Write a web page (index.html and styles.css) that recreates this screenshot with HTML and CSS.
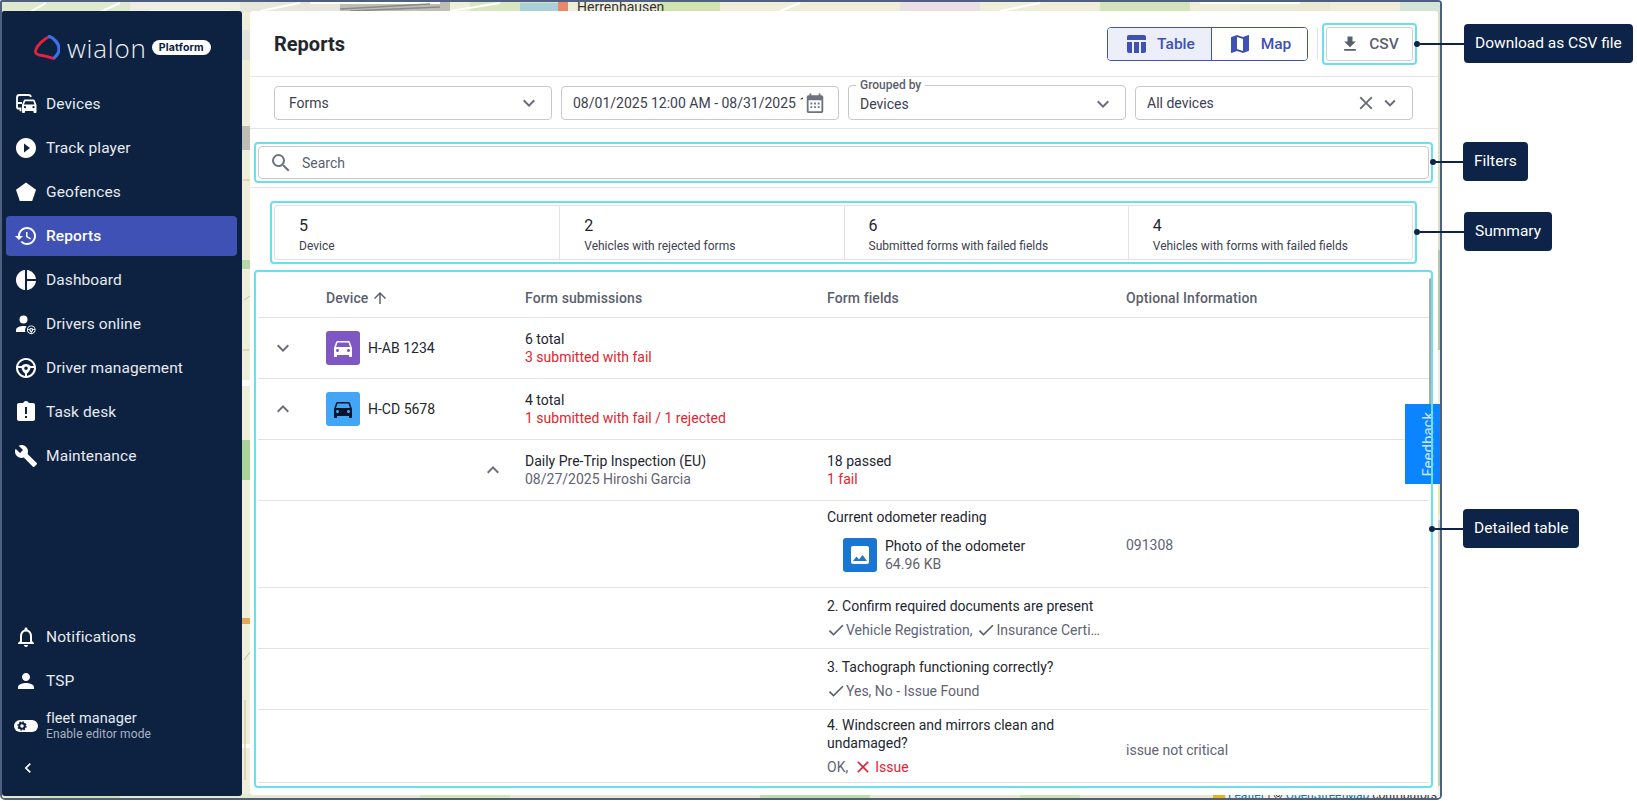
FILE: index.html
```html
<!DOCTYPE html>
<html lang="en">
<head>
<meta charset="utf-8">
<title>Reports</title>
<link rel="stylesheet" href="styles.css">
</head>
<body>
<svg class="defs" width="0" height="0" aria-hidden="true">
  <symbol id="i-down" viewBox="0 0 24 24"><path d="M16.59 8.59 12 13.17 7.41 8.59 6 10l6 6 6-6z"/></symbol>
  <symbol id="i-up" viewBox="0 0 24 24"><path d="M12 8l-6 6 1.41 1.41L12 10.83l4.59 4.58L18 14z"/></symbol>
  <symbol id="i-close" viewBox="0 0 24 24"><path d="M19 6.41 17.59 5 12 10.59 6.41 5 5 6.41 10.59 12 5 17.59 6.41 19 12 13.41 17.59 19 19 17.59 13.41 12z"/></symbol>
  <symbol id="i-check" viewBox="0 0 24 24"><path d="M9 16.17 4.83 12l-1.42 1.41L9 19 21 7l-1.41-1.41z"/></symbol>
  <symbol id="i-car" viewBox="0 0 24 24"><path d="M18.92 6.01C18.72 5.42 18.16 5 17.5 5h-11c-.66 0-1.21.42-1.42 1.01L3 12v8c0 .55.45 1 1 1h1c.55 0 1-.45 1-1v-1h12v1c0 .55.45 1 1 1h1c.55 0 1-.45 1-1v-8l-2.08-5.99zM6.5 16c-.83 0-1.5-.67-1.5-1.5S5.67 13 6.5 13s1.5.67 1.5 1.5S7.33 16 6.5 16zm11 0c-.83 0-1.5-.67-1.5-1.5s.67-1.5 1.5-1.5 1.5.67 1.5 1.5-.67 1.5-1.5 1.5zM5 11l1.5-4.5h11L19 11H5z"/></symbol>
  <symbol id="i-wheel" viewBox="0 0 24 24"><path d="M12 2C6.48 2 2 6.48 2 12s4.48 10 10 10 10-4.48 10-10S17.52 2 12 2zm0 2c3.7 0 6.8 2.5 7.7 6h-3.2c-1-1.2-2.7-2-4.5-2s-3.500.8-4.500 2H4.300c.9-3.500 4-6 7.700-6zM4 12h3.500c.6 2.300 1.900 4.500 3.500 5.600v2.300C7.200 19.400 4.300 16 4 12zm9 7.900v-2.300c1.600-1.100 2.900-3.300 3.500-5.600H20c-.3 4-3.200 7.400-7 7.900zM12 10.500a1.800 1.800 0 1 1 0 3.600 1.800 1.800 0 0 1 0-3.600z"/></symbol>
</svg>

<div class="stage">
  <div class="window">
    <svg class="map" viewBox="0 0 1442 801" width="1442" height="801" aria-hidden="true">
      <rect width="1442" height="801" fill="#efeeda"/>
      <rect x="0" y="0" width="130" height="12" fill="#dfe9d0"/>
      <rect x="130" y="0" width="110" height="12" fill="#eeeee4"/>
      <rect x="240" y="0" width="120" height="12" fill="#e6e6dc"/>
      <rect x="340" y="0" width="110" height="12" fill="#bdbdb6"/>
      <rect x="470" y="0" width="90" height="12" fill="#d7e6c0"/>
      <rect x="520" y="3" width="40" height="8" fill="#a9cfd8"/>
      <rect x="558" y="0" width="10" height="12" fill="#e8876c"/>
      <rect x="660" y="0" width="60" height="12" fill="#cfe4ae"/>
      <rect x="900" y="0" width="80" height="12" fill="#e9dfe4"/>
      <rect x="1100" y="0" width="90" height="12" fill="#d3e3bb"/>
      <rect x="1240" y="0" width="90" height="12" fill="#e9e9d4"/>
      <rect x="1400" y="0" width="42" height="12" fill="#d5e4d8"/>
      <path d="M30 12 46 3M100 12 120 3M150 11h80M260 11 300 3M310 3h130M450 11 500 3M600 11 620 3M780 11 800 3M1000 11 1040 3M1200 3h100" stroke="#fff" stroke-width="2" fill="none"/>
      <path d="M340 9 430 4M350 11 440 7" stroke="#8a8a86" stroke-width="1.500" fill="none"/>
      <rect x="242" y="30" width="8" height="30" fill="#e3e3de"/>
      <rect x="242" y="126" width="8" height="24" fill="#bdbdb6"/>
      <rect x="242" y="260" width="8" height="9" fill="#b8d7a8"/>
      <rect x="242" y="380" width="8" height="6" fill="#fff"/>
      <rect x="242" y="440" width="8" height="40" fill="#a9d39b"/>
      <rect x="242" y="618" width="8" height="6" fill="#e5a65a"/>
      <rect x="242" y="744" width="8" height="4" fill="#fff"/>
      <path d="M243 180h7M243 350h6M244 300l6-4M244 660l6-8M245 700v80" stroke="#d5b98a" stroke-width="1" fill="none"/>
      <rect x="0" y="794" width="1442" height="6" fill="#e6e8cf"/>
      <rect x="40" y="794" width="80" height="6" fill="#cfe0b0"/>
      <rect x="420" y="794" width="90" height="6" fill="#d6e3b4"/>
      <rect x="760" y="794" width="110" height="6" fill="#bddcae"/>
      <rect x="1020" y="794" width="60" height="6" fill="#cfe3b1"/>
      <rect x="1213" y="794" width="12" height="6" fill="#e4b61a"/>
      <rect x="1438" y="12" width="4" height="240" fill="#d8e2c2"/>
      <rect x="1438" y="250" width="4" height="100" fill="#b3c9a8"/>
      <rect x="1438" y="484" width="4" height="30" fill="#eded9c"/>
      <rect x="1438" y="520" width="4" height="120" fill="#cfcfc6"/>
      <rect x="1438" y="640" width="4" height="150" fill="#bcd7a8"/>
      <text x="577" y="12" class="map-label">Herrenhausen</text>
      <rect x="1226" y="786" width="216" height="14" fill="#f2f2ec"/>
      <text x="1228" y="799" class="map-attr"><tspan class="map-link">Leaflet</tspan> | © <tspan class="map-link">OpenStreetMap</tspan> contributors</text>
    </svg>

    <aside class="sidebar">
      <div class="logo">
        <svg class="logo-mark" viewBox="0 0 26 25" width="26" height="25" aria-hidden="true">
          <path d="M15.500 1.500C10 4 3 10 1.500 15.500 1 19 4 20 8 20.500c4 .5 8 2 12 3" fill="none" stroke="#e8203f" stroke-width="2.800" stroke-linecap="round"/>
          <path d="M15.500 1.500C20 3 25 9 25 13.500c0 4-2 7-4.500 9" fill="none" stroke="#3d6fe8" stroke-width="3.200" stroke-linecap="round"/>
        </svg>
        <span class="logo-word">wialon</span>
        <span class="logo-badge">Platform</span>
      </div>
      <nav class="nav">
        <a class="nav-item">
          <svg class="nav-icon" viewBox="0 0 24 24" aria-hidden="true"><path d="M3 16.500V5.500C3 4 4 3 5.500 3h9c1.200 0 2.200.8 2.400 2" fill="none" stroke="#fff" stroke-width="1.800"/><path d="M3 16.500h3.500v2.800" fill="none" stroke="#fff" stroke-width="1.800"/><path d="M3 11h5" stroke="#fff" stroke-width="1.800"/><path d="M14 7.500h5.500c.6 0 1.100.4 1.300.9L22.500 13v7a1 1 0 0 1-1 1h-1a1 1 0 0 1-1-1v-1H11v1a1 1 0 0 1-1 1H9a1 1 0 0 1-1-1v-7l1.700-4.600c.2-.5.700-.9 1.300-.9zM10 12.500h10.500l-1.200-3.300h-8.100zM11 16.300a1.100 1.100 0 1 0 0-2.200 1.100 1.100 0 0 0 0 2.200zm8.500 0a1.100 1.100 0 1 0 0-2.200 1.100 1.100 0 0 0 0 2.200z"/></svg>
          <span>Devices</span>
        </a>
        <a class="nav-item">
          <svg class="nav-icon" viewBox="0 0 24 24" aria-hidden="true"><path d="M12 2C6.480 2 2 6.480 2 12s4.480 10 10 10 10-4.480 10-10S17.520 2 12 2zm-2 14.500v-9l6 4.500-6 4.500z"/></svg>
          <span>Track player</span>
        </a>
        <a class="nav-item">
          <svg class="nav-icon" viewBox="0 0 24 24" aria-hidden="true"><path d="M12 2.500 2 9.800 5.800 21h12.400L22 9.800z"/></svg>
          <span>Geofences</span>
        </a>
        <a class="nav-item nav-item-active">
          <svg class="nav-icon" viewBox="0 0 24 24" aria-hidden="true"><path d="M13 3c-4.970 0-9 4.030-9 9H1l3.890 3.890.07.140L9 12H6c0-3.870 3.130-7 7-7s7 3.130 7 7-3.130 7-7 7c-1.930 0-3.680-.790-4.940-2.060l-1.420 1.420C8.270 19.990 10.510 21 13 21c4.970 0 9-4.030 9-9s-4.030-9-9-9zm-1 5v5l4.280 2.540.720-1.210-3.500-2.080V8H12z"/></svg>
          <span>Reports</span>
        </a>
        <a class="nav-item">
          <svg class="nav-icon" viewBox="0 0 24 24" aria-hidden="true"><path d="M11 2v20c-5.070-.500-9-4.790-9-10s3.930-9.500 9-10zm2.030 0v8.990H22c-.470-4.740-4.240-8.520-8.970-8.990zm0 11.010V22c4.740-.470 8.500-4.250 8.970-8.990h-8.970z"/></svg>
          <span>Dashboard</span>
        </a>
        <a class="nav-item">
          <svg class="nav-icon" viewBox="0 0 24 24" aria-hidden="true"><circle cx="9.500" cy="7.500" r="4"/><path d="M2 20v-2c0-2.700 4.500-4 7.500-4 1 0 2 .1 3 .4-1 1.100-1.500 2.300-1.500 3.600 0 .7.100 1.400.4 2z"/><use href="#i-wheel" x="12" y="12.500" width="10.500" height="10.500"/></svg>
          <span>Drivers online</span>
        </a>
        <a class="nav-item">
          <svg class="nav-icon" viewBox="0 0 24 24" aria-hidden="true"><use href="#i-wheel"/></svg>
          <span>Driver management</span>
        </a>
        <a class="nav-item">
          <svg class="nav-icon" viewBox="0 0 24 24" aria-hidden="true"><path d="M19 3h-4.180C14.400 1.840 13.300 1 12 1c-1.300 0-2.400.840-2.820 2H5c-1.100 0-2 .900-2 2v14c0 1.100.900 2 2 2h14c1.100 0 2-.900 2-2V5c0-1.100-.900-2-2-2zm-6 15h-2v-2h2v2zm0-4h-2V7h2v7z"/></svg>
          <span>Task desk</span>
        </a>
        <a class="nav-item">
          <svg class="nav-icon" viewBox="0 0 24 24" aria-hidden="true"><path d="M22.700 19l-9.100-9.100c.900-2.300.400-5-1.500-6.900-2-2-5-2.400-7.400-1.300L9 6 6 9 1.600 4.700C.400 7.100.900 10.100 2.900 12.100c1.900 1.900 4.600 2.400 6.900 1.500l9.100 9.100c.400.400 1 .400 1.400 0l2.300-2.300c.500-.400.500-1.100.100-1.400z"/></svg>
          <span>Maintenance</span>
        </a>
      </nav>
      <div class="nav nav-bottom">
        <a class="nav-item">
          <svg class="nav-icon" viewBox="0 0 24 24" aria-hidden="true"><path d="M12 22c1.100 0 2-.900 2-2h-4c0 1.100.900 2 2 2zm6-6v-5c0-3.070-1.630-5.640-4.500-6.320V4c0-.830-.670-1.500-1.500-1.500s-1.500.670-1.500 1.500v.680C7.640 5.360 6 7.920 6 11v5l-2 2v1h16v-1l-2-2zm-2 1H8v-6c0-2.480 1.510-4.500 4-4.500s4 2.020 4 4.500v6z"/></svg>
          <span>Notifications</span>
        </a>
        <a class="nav-item">
          <svg class="nav-icon" viewBox="0 0 24 24" aria-hidden="true"><path d="M12 12c2.210 0 4-1.790 4-4s-1.790-4-4-4-4 1.790-4 4 1.790 4 4 4zm0 2c-2.670 0-8 1.340-8 4v2h16v-2c0-2.660-5.330-4-8-4z"/></svg>
          <span>TSP</span>
        </a>
        <a class="nav-item nav-item-role">
          <svg class="nav-toggle" viewBox="0 0 24 12" aria-hidden="true"><rect width="24" height="12" rx="6" fill="#fff"/><circle cx="8" cy="6" r="2.800" fill="none" stroke="#0d2240" stroke-width="2"/><circle cx="8" cy="6" r="4" fill="none" stroke="#0d2240" stroke-width="1.400" stroke-dasharray="1.500 1.640"/></svg>
          <span class="role-text">
            <span class="role-name">fleet manager</span>
            <span class="role-hint">Enable editor mode</span>
          </span>
        </a>
        <a class="nav-collapse">
          <svg class="nav-chevron" viewBox="0 0 24 24" aria-hidden="true"><path d="M15.410 7.410 14 6l-6 6 6 6 1.410-1.410L10.830 12z"/></svg>
        </a>
      </div>
    </aside>

    <main class="panel">
      <header class="panel-head">
        <h1 class="panel-title">Reports</h1>
        <div class="seg">
          <button class="seg-btn seg-btn-active">
            <svg class="seg-icon" viewBox="0 0 24 24" aria-hidden="true"><path d="M10 10.020h5V21h-5zM17 21h3c1.100 0 2-.900 2-2v-9h-5v11zm3-18H5c-1.100 0-2 .900-2 2v3h19V5c0-1.100-.900-2-2-2zM3 19c0 1.100.900 2 2 2h3V10H3v9z"/></svg>
            Table
          </button>
          <button class="seg-btn">
            <svg class="seg-icon" viewBox="0 0 24 24" aria-hidden="true"><path d="M20.500 3l-.160.030L15 5.100 9 3 3.360 4.900c-.210.070-.360.250-.360.480V20.500c0 .280.220.500.500.500l.160-.030L9 18.900l6 2.100 5.640-1.900c.210-.070.360-.250.360-.480V3.500c0-.280-.220-.500-.500-.500zM15 19l-6-2.110V5l6 2.110V19z"/></svg>
            Map
          </button>
        </div>
        <span class="head-sep"></span>
        <div class="hl hl-csv">
          <button class="csv-btn">
            <svg class="csv-icon" viewBox="0 0 24 24" aria-hidden="true"><path d="M19 9h-4V3H9v6H5l7 7 7-7zM5 18v2h14v-2H5z"/></svg>
            CSV
          </button>
        </div>
      </header>

      <section class="filters">
        <div class="field field-forms"><span class="field-text">Forms</span><svg class="ico ico-chev"><use href="#i-down"/></svg></div>
        <div class="field">
          <span class="field-text field-date">08/01/2025 12:00 AM - 08/31/2025 11:59 PM</span>
          <svg class="ico-cal" viewBox="0 0 24 24" aria-hidden="true"><path fill-rule="evenodd" d="M5 3.500h1V1.500h2v2h8v-2h2v2h1c1.100 0 2 .9 2 2V21c0 1.100-.9 2-2 2H5c-1.100 0-2-.9-2-2V5.500c0-1.100.9-2 2-2zM5 9v12h14V9zM7 11.500h2v2H7zM11 11.500h2v2h-2zM15 11.500h2v2h-2zM7 15.500h2v2H7zM11 15.500h2v2h-2zM15 15.500h2v2h-2z"/></svg>
        </div>
        <div class="field field-group">
          <span class="field-legend">Grouped by</span>
          <span class="field-text">Devices</span>
          <svg class="ico ico-chev"><use href="#i-down"/></svg>
        </div>
        <div class="field">
          <span class="field-text">All devices</span>
          <svg class="ico ico-x"><use href="#i-close"/></svg>
          <svg class="ico ico-chev-small"><use href="#i-down"/></svg>
        </div>
      </section>

      <section class="search-wrap">
        <div class="hl">
          <div class="search">
            <svg class="search-icon" viewBox="0 0 24 24" aria-hidden="true"><path d="M15.500 14h-.790l-.280-.270A6.471 6.471 0 0 0 16 9.500 6.500 6.500 0 1 0 9.500 16c1.610 0 3.090-.590 4.230-1.570l.270.280v.790l5 4.990L20.490 19l-4.990-5zm-6 0C7.010 14 5 11.990 5 9.500S7.010 5 9.500 5 14 7.010 14 9.500 11.990 14 9.500 14z"/></svg>
            <span class="search-text">Search</span>
          </div>
        </div>
      </section>

      <section class="hl hl-summary">
        <div class="summary">
          <div class="sum-cell"><span class="sum-num">5</span><span class="sum-label">Device</span></div>
          <div class="sum-cell"><span class="sum-num">2</span><span class="sum-label">Vehicles with rejected forms</span></div>
          <div class="sum-cell"><span class="sum-num">6</span><span class="sum-label">Submitted forms with failed fields</span></div>
          <div class="sum-cell"><span class="sum-num">4</span><span class="sum-label">Vehicles with forms with failed fields</span></div>
        </div>
      </section>

      <section class="hl hl-table">
        <div class="row row-head">
          <span></span>
          <span class="th th-sort">Device <svg class="ico-sort" viewBox="0 0 24 24" aria-hidden="true"><path d="M4 12l1.410 1.410L11 7.830V20h2V7.830l5.580 5.590L20 12l-8-8-8 8z"/></svg></span>
          <span class="th">Form submissions</span>
          <span class="th">Form fields</span>
          <span class="th">Optional Information</span>
        </div>
        <div class="row">
          <svg class="ico row-chev"><use href="#i-down"/></svg>
          <div class="device"><span class="dev-icon dev-purple"><svg class="dev-car"><use href="#i-car"/></svg></span>H-AB 1234</div>
          <div class="cell"><div>6 total</div><div class="red">3 submitted with fail</div></div>
        </div>
        <div class="row">
          <svg class="ico row-chev"><use href="#i-up"/></svg>
          <div class="device"><span class="dev-icon dev-blue"><svg class="dev-car"><use href="#i-car"/></svg></span>H-CD 5678</div>
          <div class="cell"><div>4 total</div><div class="red">1 submitted with fail / 1 rejected</div></div>
        </div>
        <div class="row">
          <span></span>
          <svg class="ico row-chev row-chev-sub"><use href="#i-up"/></svg>
          <div class="cell"><div>Daily Pre-Trip Inspection (EU)</div><div class="muted">08/27/2025 Hiroshi Garcia</div></div>
          <div class="cell"><div>18 passed</div><div class="red">1 fail</div></div>
        </div>
        <div class="row row-photo">
          <div class="question question-photo">
            <div>Current odometer reading</div>
            <div class="attach">
              <span class="attach-icon"><svg class="attach-svg" viewBox="0 0 24 24" aria-hidden="true"><path d="M21 19V5c0-1.100-.900-2-2-2H5c-1.100 0-2 .900-2 2v14c0 1.100.900 2 2 2h14c1.100 0 2-.900 2-2zM8.500 13.500l2.500 3.010L14.500 12l4.500 6H5l3.500-4.500z"/></svg></span>
              <div class="cell"><div>Photo of the odometer</div><div class="muted">64.96 KB</div></div>
            </div>
          </div>
          <div class="opt opt-photo">091308</div>
        </div>
        <div class="row">
          <div class="question">
            <div>2. Confirm required documents are present</div>
            <div class="answers muted"><svg class="ico-check"><use href="#i-check"/></svg><span>Vehicle Registration,</span><svg class="ico-check ico-check-next"><use href="#i-check"/></svg><span class="ellipsis">Insurance Certificate</span></div>
          </div>
        </div>
        <div class="row">
          <div class="question">
            <div>3. Tachograph functioning correctly?</div>
            <div class="answers muted"><svg class="ico-check"><use href="#i-check"/></svg><span>Yes, No - Issue Found</span></div>
          </div>
        </div>
        <div class="row row-last">
          <div class="question">
            <div>4. Windscreen and mirrors clean and undamaged?</div>
            <div class="answers muted"><span>OK,</span><svg class="ico-fail"><use href="#i-close"/></svg><span class="red">Issue</span></div>
          </div>
          <div class="opt">issue not critical</div>
        </div>
        <span class="scroll-thumb"></span>
      </section>
    </main>

    <button class="feedback"><span>Feedback</span></button>
  </div>

  <div class="callout callout-csv"><i class="callout-dot"></i><i class="callout-line"></i><span class="callout-label">Download as CSV file</span></div>
  <div class="callout callout-filters"><i class="callout-dot"></i><i class="callout-line"></i><span class="callout-label">Filters</span></div>
  <div class="callout callout-summary"><i class="callout-dot"></i><i class="callout-line"></i><span class="callout-label">Summary</span></div>
  <div class="callout callout-table"><i class="callout-dot"></i><i class="callout-line"></i><span class="callout-label">Detailed table</span></div>
</div>
</body>
</html>
```
FILE: styles.css
```css
* { box-sizing: border-box; }
html, body { margin: 0; padding: 0; background: #fff; }
body { font-family: Roboto, "Liberation Sans", sans-serif; font-size: 14px; line-height: 18px; color: #23262f; overflow: hidden; }
button { font: inherit; cursor: pointer; }
.defs { position: absolute; }

.stage { position: relative; width: 1637px; height: 801px; overflow: hidden; }
.window {
  position: relative; display: flex; gap: 8px; width: 1442px; height: 800px;
  padding: 9px 2px 3px 0; border: 2px solid #4f5f7f; border-radius: 2px 4px 5px 5px; overflow: hidden;
}
.map { position: absolute; left: -2px; top: -2px; }
.map-label { font: 14px Roboto, sans-serif; fill: #333; }
.map-attr { font: 12px Roboto, sans-serif; fill: #333; }
.map-link { fill: #0f78a8; }

/* sidebar */
.sidebar {
  position: relative; display: flex; flex-direction: column; flex: 0 0 240px; margin-bottom: -1px;
  background: #0d2240; border-radius: 2px 3px 3px 3px; color: #e7eaf0; padding: 0 5px 0 4px;
}
.logo { display: flex; align-items: center; height: 73px; padding: 0 0 0 28px; }
.logo-mark { flex: none; }
.logo-word { margin-left: 7px; font: 300 26px/26px "Open Sans", sans-serif; letter-spacing: .8px; color: #eef0f4; }
.logo-badge { margin-left: 5px; padding: 0 7px; height: 15px; border-radius: 8px; background: #fff; color: #0d2240; font: 700 10.500px/15px Inter, sans-serif; letter-spacing: .2px; }
.nav { display: flex; flex-direction: column; gap: 4px; }
.nav-bottom { margin-top: auto; }
.nav-item {
  display: flex; align-items: center; gap: 8px; height: 40px; padding-left: 8px;
  font-size: 15.500px; letter-spacing: .1px; border-radius: 4px; color: #e7eaf0;
}
.nav-item-active { background: #3f51b5; color: #fff; font-weight: 500; }
.nav-icon { width: 24px; height: 24px; flex: none; fill: #fff; }
.nav-item-active .nav-icon { width: 24px; }
.nav-item-role { height: 42px; }
.nav-toggle { width: 24px; height: 14px; flex: none; }
.role-text { display: flex; flex-direction: column; }
.role-name { font-size: 14.500px; line-height: 17px; }
.role-hint { font-size: 12px; line-height: 15px; color: #a9b2c2; letter-spacing: .1px; }
.nav-collapse { display: flex; align-items: center; height: 40px; padding: 0 0 0 12px; margin-bottom: 8px; margin-top: -3px; }
.nav-chevron { width: 20px; height: 20px; fill: #fff; }

/* panel */
.panel { position: relative; flex: 1; display: flex; flex-direction: column; background: #fff; border-radius: 3px; min-width: 0; }
.panel-head { display: flex; align-items: center; height: 66px; flex: none; padding: 0 21px 0 24px; border-bottom: 1px solid #e4e4e4; }
.panel-title { margin: 0 auto 0 0; font-size: 20px; line-height: 24px; font-weight: 700; color: #23262f; }
.seg { display: flex; width: 201px; height: 34px; border: 1px solid #3f51b5; border-radius: 4px; overflow: hidden; }
.seg-btn {
  display: flex; align-items: center; justify-content: center; gap: 9px; flex: 1; padding: 0; background: #fff; border: 0;
  color: #3f51b5; font-size: 15.500px; font-weight: 500;
}
.seg-btn-active { flex: 0 0 104px; background: #eceef9; border-right: 1px solid #3f51b5; }
.seg-icon { width: 24px; height: 24px; fill: #3f51b5; }
.head-sep { width: 1px; height: 31px; margin: 0 4px 0 9px; background: #e2e2e2; }
.hl { border: 2px solid #69e0f0; border-radius: 4px; padding: 2px; }
.csv-btn {
  display: flex; align-items: center; justify-content: center; gap: 9px; width: 87px; height: 34px; padding: 0;
  background: #fff; border: 1px solid #cfcfcf; border-radius: 3px; color: #5a5f70; font-size: 15.500px; font-weight: 500;
}
.csv-icon { width: 20px; height: 20px; fill: #5a5f70; }

/* filter row */
.filters { display: grid; grid-template-columns: repeat(4, 1fr); gap: 9px; flex: none; height: 52px; padding: 9px 25px 8px 24px; border-bottom: 1px solid #e4e4e4; }
.field { position: relative; display: flex; align-items: center; height: 34px; padding: 0 11px 0 11px; border: 1px solid #c8c8c8; border-radius: 4px; color: #3c4150; min-width: 0; }
.field-forms { padding-left: 14px; }
.field-group { height: 35px; margin-top: -1px; padding-top: 2px; }
.field-text { flex: 1; min-width: 0; white-space: nowrap; overflow: hidden; }
.field-legend { position: absolute; left: 7px; top: -8px; padding: 0 4px; background: #fff; font-size: 12px; line-height: 14px; font-weight: 500; color: #5a5f70; }
.ico { display: block; width: 24px; height: 24px; fill: #6a6e7a; flex: none; }
.ico-chev { margin-right: -1px; }
.ico-x { width: 22px; height: 22px; }
.ico-chev-small { width: 22px; height: 22px; margin-left: 2px; margin-right: 0; }
.field-date { margin-right: 1px; }
.ico-cal { width: 22px; height: 22px; fill: #6f7380; flex: none; margin-right: 1px; }

/* search */
.search-wrap { flex: none; height: 59px; padding: 13px 5px 4px 4px; border-bottom: 1px solid #e4e4e4; }
.search { display: flex; align-items: center; height: 33px; padding-left: 10px; border: 1px solid #c8c8c8; border-radius: 4px; }
.search-icon { width: 24px; height: 24px; fill: #6f7380; }
.search-text { margin-left: 9px; color: #5a5f70; }

/* summary */
.hl-summary { flex: none; margin: 13px 21px 0 20px; height: 63px; }
.summary { display: grid; grid-template-columns: repeat(4, 1fr); height: 55px; border: 1px solid #e2e2e2; border-radius: 3px; }
.sum-cell { display: flex; flex-direction: column; padding: 10px 0 0 24px; border-left: 1px solid #e2e2e2; }
.sum-cell:first-child { border-left: 0; padding-left: 24px; }
.sum-num { font-size: 16px; line-height: 20px; color: #23262f; }
.sum-label { font-size: 12px; line-height: 16px; margin-top: 2px; color: #3c4150; }

/* table */
.hl-table { position: relative; flex: none; margin: 6px 5px 0 4px; height: 518px; border-color: transparent; }
.hl-table::after { content: ""; position: absolute; inset: -2px; border: 2px solid #69e0f0; border-radius: 4px; z-index: 2; pointer-events: none; }
.row { display: grid; grid-template-columns: 68px 199px 302px 299px 1fr; align-items: center; height: 61px; border-bottom: 1px solid #e3e3e3; }
.row-head { height: 44px; padding-top: 4px; }
.th { font-weight: 500; color: #5a5f70; letter-spacing: .1px; }
.th-sort { display: flex; align-items: center; gap: 3px; }
.ico-sort { width: 18px; height: 18px; fill: #5a5f70; }
.row-chev { margin-left: 13px; }
.row-chev-sub { margin-left: auto; margin-right: 20px; }
.device { display: flex; align-items: center; gap: 8px; }
.dev-icon { display: flex; align-items: center; justify-content: center; width: 34px; height: 34px; border-radius: 3px; }
.dev-purple { background: #7e57c2; }
.dev-purple .dev-car { fill: #fff; }
.dev-blue { background: #42a5f5; }
.dev-blue .dev-car { fill: #06152b; }
.dev-car { width: 24px; height: 24px; }
.cell { min-width: 0; }
.red { color: #e0252f; }
.muted { color: #5f6475; }

.question { grid-column: 4; width: 282px; }
.answers { display: flex; align-items: center; margin-top: 6px; height: 18px; }
.ico-check { width: 20px; height: 20px; fill: #5a5f70; flex: none; margin-right: 0; margin-left: -1px; }
.ico-check-next { margin-left: 4px; }
.ico-fail { width: 20px; height: 20px; fill: #e0252f; flex: none; margin-left: 5px; margin-right: 2px; }
.ellipsis { overflow: hidden; text-overflow: ellipsis; white-space: nowrap; min-width: 0; width: 110px; }
.opt { grid-column: 5; color: #5f6475; }
.row-photo { height: 87px; align-items: start; padding-top: 7px; }
.attach { display: flex; align-items: center; gap: 8px; margin: 11px 0 0 16px; }
.attach-icon { display: flex; align-items: center; justify-content: center; width: 34px; height: 34px; border-radius: 3px; background: #1976d2; }
.attach-svg { width: 24px; height: 24px; fill: #fff; }
.opt-photo { margin-top: 28px; }
.row-last { height: 73px; }
.row-last .opt { margin-top: 8px; }
.scroll-thumb { position: absolute; right: -2px; top: 6px; width: 4px; height: 130px; background: #a9a9a9; border-radius: 2px; }

/* feedback tab */
.feedback {
  position: absolute; right: 0; top: 402px; z-index: 1; width: 35px; height: 80px; padding: 0 0 0 10px; border: 0;
  display: flex; align-items: center; justify-content: center; background: #0a84ff; color: #cfe5ff; font-size: 15px;
}
.feedback span { writing-mode: vertical-rl; transform: rotate(180deg); }

/* annotations */
.callout { position: absolute; display: flex; align-items: center; z-index: 3; height: 39px; }
.callout-dot { flex: none; width: 6px; height: 6px; margin-left: -3px; border-radius: 50%; background: #0d2347; }
.callout-line { flex: none; height: 2px; background: #0d2347; }
.callout-label { display: block; height: 39px; padding: 0 11px; border-radius: 4px; background: #0d2347; color: #fff; font-size: 15.500px; line-height: 39px; white-space: nowrap; }
.callout-csv { left: 1417px; top: 24px; }
.callout-csv .callout-line { width: 44px; }
.callout-filters { left: 1433px; top: 142px; }
.callout-filters .callout-line { width: 27px; }
.callout-summary { left: 1417px; top: 212px; }
.callout-summary .callout-line { width: 44px; }
.callout-table { left: 1432px; top: 509px; }
.callout-table .callout-line { width: 28px; }
```
